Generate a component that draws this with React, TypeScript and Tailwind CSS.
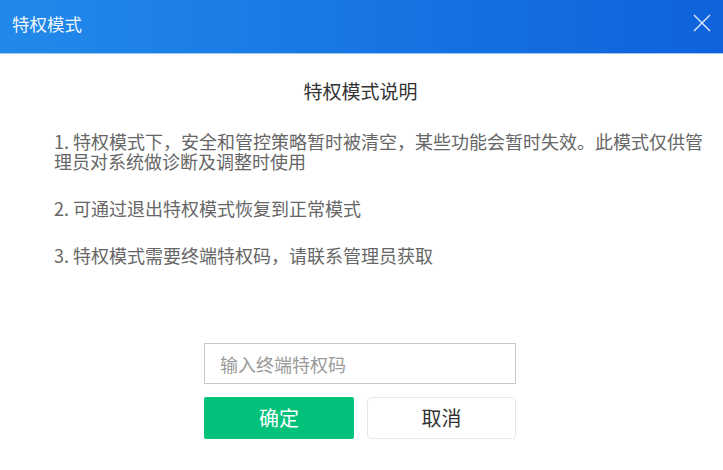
import React from 'react'

const font = { fontFamily: '"Noto Sans CJK SC", "Noto Sans", sans-serif' }

const notes = [
  '1. 特权模式下，安全和管控策略暂时被清空，某些功能会暂时失效。此模式仅供管理员对系统做诊断及调整时使用',
  '2. 可通过退出特权模式恢复到正常模式',
  '3. 特权模式需要终端特权码，请联系管理员获取',
]

export default function App() {
  return (
    <div className="w-[723px] h-[470px] bg-white flex flex-col overflow-hidden" style={font}>
      <div className="h-[54px] shrink-0 flex items-center justify-between pl-3 pr-[10px] bg-gradient-to-r from-[#2289ea] to-[#0f62dc] border-b border-[#9ec8f4]">
        <span className="text-[17.5px] leading-none text-white/95 -mt-[5px]">特权模式</span>
        <button className="w-[22px] h-[22px] flex items-center justify-center -mt-[8px]">
          <svg width="18" height="18" viewBox="0 0 18 18" fill="none">
            <path d="M1 1L17 17M17 1L1 17" stroke="#dfeaff" strokeWidth="1.4" />
          </svg>
        </button>
      </div>

      <h2 className="mt-[24px] text-center text-[19px] leading-[25px] text-[#333] pr-[2px]">特权模式说明</h2>

      <div className="mt-[28px] pl-[54px] pr-[11px] flex flex-col gap-[27px]">
        {notes.map((t, i) => (
          <p key={i} className="text-[18px] leading-[20px] text-[#666]">
            {t}
          </p>
        ))}
      </div>

      <div className="mt-[78px] flex flex-col items-center pr-[3px]">
        <input
          placeholder="输入终端特权码"
          className="w-[312px] h-[41px] border border-[#c9c9c9] px-[15px] text-[18px] text-[#333] placeholder:text-[#9a9a9a] outline-none"
          style={font}
        />
        <div className="mt-[13px] flex gap-[13px]">
          <button className="w-[150px] h-[42px] bg-[#02c27b] rounded-[2px] text-white text-[20px]">确定</button>
          <button className="w-[149px] h-[42px] bg-white border border-[#e3e6ee] rounded-[4px] text-[#333] text-[20px]">
            取消
          </button>
        </div>
      </div>
    </div>
  )
}
